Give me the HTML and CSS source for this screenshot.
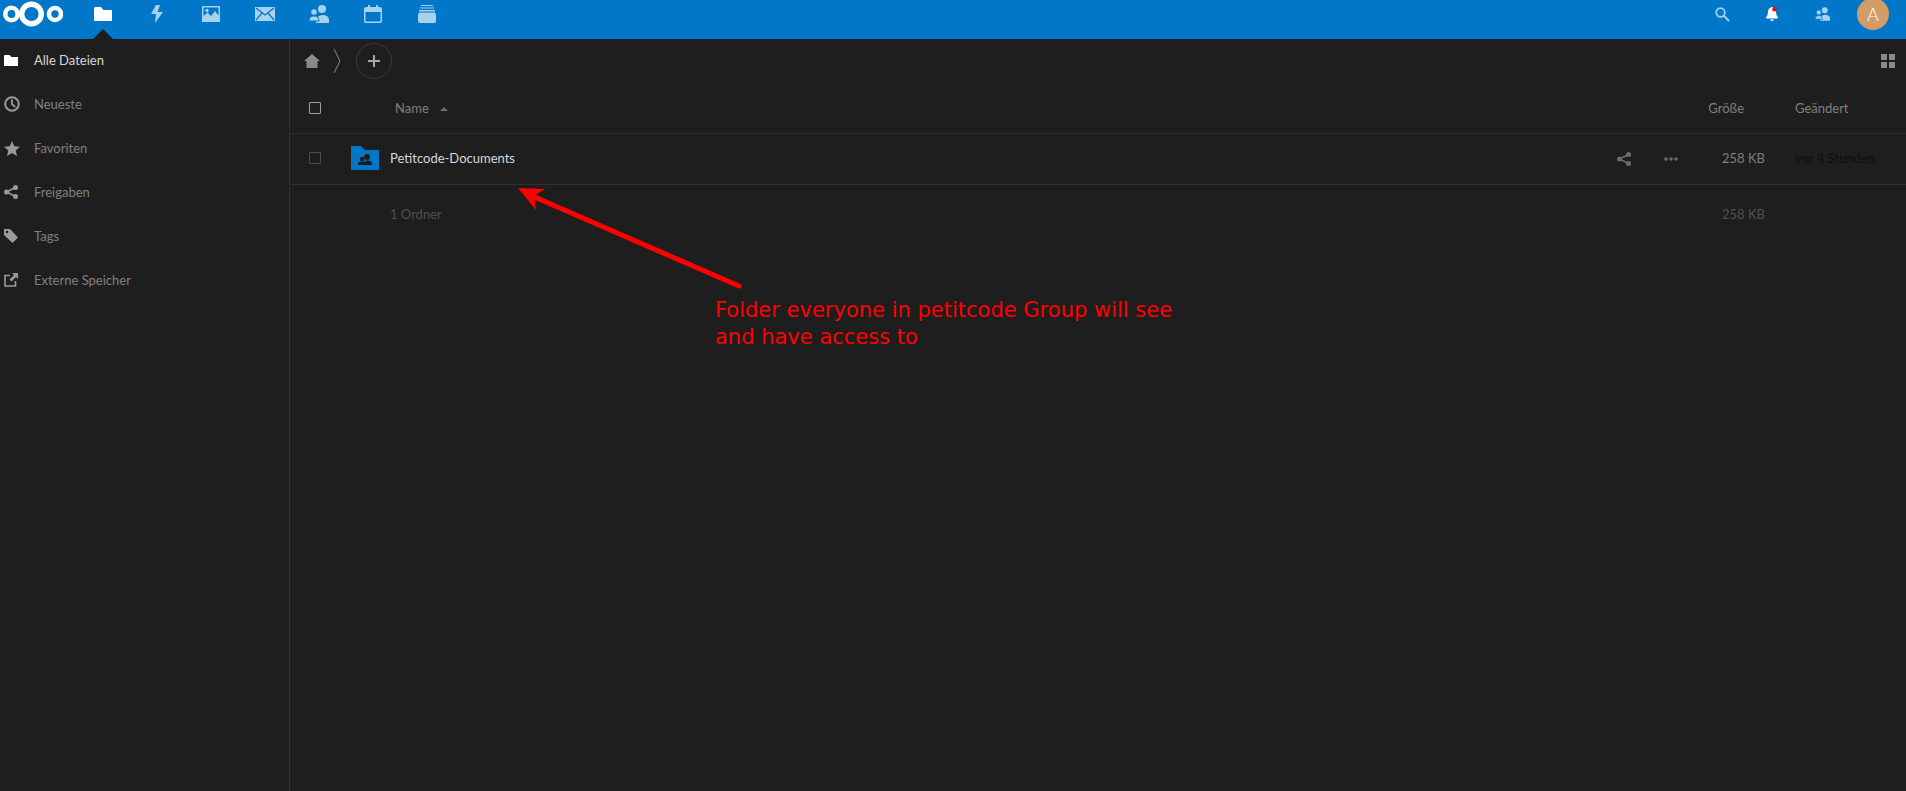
FILE: index.html
```html
<!DOCTYPE html>
<html lang="de">

<head>
    <meta charset="UTF-8">
    <title>Dateien</title>
    <link rel="stylesheet" href="styles.css">
</head>

<body>
    <header class="topbar">
        <svg class="logo" width="60" height="28" viewBox="0 0 60 28">
            <circle cx="8.500" cy="14" r="6.200" fill="none" stroke="#fff" stroke-width="4.600" />
            <circle cx="28.500" cy="14" r="9.800" fill="none" stroke="#fff" stroke-width="5.400" />
            <circle cx="52" cy="14" r="6" fill="none" stroke="#fff" stroke-width="4.600" />
        </svg>
        <nav class="apps">
            <a class="app app-active">
                <svg width="18" height="14" viewBox="0 0 18 14"><path d="M0 1.500Q0 0 1.500 0H7L9.500 3H18V14H0Z" fill="#fff" /></svg>
            </a>
            <a class="app">
                <svg width="12" height="18" viewBox="0 0 12 18"><path d="M5 0 0 9H5L4 18 12 7H6.500L9 0Z" fill="#a6d2ee" /></svg>
            </a>
            <a class="app">
                <svg width="18" height="16" viewBox="0 0 18 16"><path fill-rule="evenodd" d="M0 0H18V16H0ZM1.500 1.500V10L5.500 6.500 9 10 13 5 16.500 9.500V1.500Z" fill="#a6d2ee" /><circle cx="5" cy="4.500" r="1.700" fill="#a6d2ee" /></svg>
            </a>
            <a class="app">
                <svg width="20" height="14" viewBox="0 0 20 14"><path d="M0 0H20V14H0Z" fill="#a6d2ee" /><path d="M1 1 10 8 19 1M1 13 7 6M19 13 13 6" fill="none" stroke="#0077c8" stroke-width="1.200" /></svg>
            </a>
            <a class="app">
                <svg width="20" height="18" viewBox="0 0 20 18"><circle cx="13" cy="4" r="4" fill="#a6d2ee" /><path d="M7 18Q6 11 13 10 20 10 20 15V18Z" fill="#a6d2ee" /><circle cx="5" cy="7" r="3.300" stroke="#0077c8" stroke-width="1" fill="#a6d2ee" /><path d="M0 16Q0 11 5 11 10 11 10 16Z" stroke="#0077c8" stroke-width="1" fill="#a6d2ee" /></svg>
            </a>
            <a class="app">
                <svg width="18" height="18" viewBox="0 0 18 18"><path fill-rule="evenodd" d="M2 2H4V0H6V2H12V0H14V2H16Q18 2 18 4V16Q18 18 16 18H2Q0 18 0 16V4Q0 2 2 2ZM1.500 7V15.500Q1.500 16.500 2.500 16.500H15.500Q16.500 16.500 16.500 15.500V7Z" fill="#a6d2ee" /></svg>
            </a>
            <a class="app">
                <svg width="18" height="18" viewBox="0 0 18 18"><path d="M3 0H15V1H3ZM2 2.500H16V3.500H2ZM1 5H17V6.500H1ZM2 7.500H16Q18 7.500 18 9.500V16Q18 18 16 18H2Q0 18 0 16V9.500Q0 7.500 2 7.500Z" fill="#a6d2ee" /></svg>
            </a>
        </nav>
        <div class="top-right">
            <a class="tool">
                <svg width="15" height="15" viewBox="0 0 15 15"><circle cx="5.500" cy="5.500" r="4.300" fill="none" stroke="#a6d2ee" stroke-width="1.700" /><path d="M8.800 8.800 14 14" stroke="#a6d2ee" stroke-width="2" /></svg>
            </a>
            <a class="tool">
                <svg width="12" height="14" viewBox="0 0 12 14"><path d="M6 0Q10 1 10 5 10 9 12 10.500V11.500H0V10.500Q2 9 2 5 2 1 6 0ZM4 12.500H8Q7.500 14 6 14 4.500 14 4 12.500Z" fill="#fff" /><circle cx="8.500" cy="2.200" r="2.200" fill="#f00" /></svg>
            </a>
            <a class="tool">
                <svg width="15" height="14" viewBox="0 0 20 18"><circle cx="13" cy="4" r="4" fill="#a6d2ee" /><path d="M7 18Q6 11 13 10 20 10 20 15V18Z" fill="#a6d2ee" /><circle cx="5" cy="7" r="3.300" stroke="#0077c8" stroke-width="1" fill="#a6d2ee" /><path d="M0 16Q0 11 5 11 10 11 10 16Z" stroke="#0077c8" stroke-width="1" fill="#a6d2ee" /></svg>
            </a>
            <div class="avatar">A</div>
        </div>
    </header>

    <div class="content">
        <aside class="sidebar">
            <a class="nav-item nav-current">
                <span class="nav-icon"><svg width="14" height="11" viewBox="0 0 14 11"><path d="M0 1Q0 0 1 0H5.500L7.500 2H14V11H0Z" fill="#fff" /></svg></span>
                Alle Dateien
            </a>
            <a class="nav-item">
                <span class="nav-icon"><svg width="16" height="16" viewBox="0 0 16 16"><circle cx="8" cy="8" r="6.800" fill="none" stroke="#9a9a9a" stroke-width="2" /><path d="M7 3.500H8.800V7.500L11.800 10.500 10.500 11.800 7 8.500Z" fill="#9a9a9a" /></svg></span>
                Neueste
            </a>
            <a class="nav-item">
                <span class="nav-icon"><svg width="16" height="15" viewBox="0 0 16 15"><path d="M8 0 10.300 5.200 16 5.700 11.700 9.500 13 15 8 12.100 3 15 4.300 9.500 0 5.700 5.700 5.200Z" fill="#9a9a9a" /></svg></span>
                Favoriten
            </a>
            <a class="nav-item">
                <span class="nav-icon"><svg width="14" height="14" viewBox="0 0 14 14"><circle cx="11.500" cy="2.500" r="2.500" fill="#9a9a9a" /><circle cx="2.500" cy="7" r="2.500" fill="#9a9a9a" /><circle cx="11.500" cy="11.500" r="2.500" fill="#9a9a9a" /><path d="M11.500 2.500 2.500 7 11.500 11.500" fill="none" stroke="#9a9a9a" stroke-width="1.800" /></svg></span>
                Freigaben
            </a>
            <a class="nav-item">
                <span class="nav-icon"><svg width="14" height="14" viewBox="0 0 14 14"><path fill-rule="evenodd" d="M0 0H6L14 8.500 8.500 14 0 6ZM3 1.800A1.200 1.200 0 1 0 3 4.200 1.200 1.200 0 1 0 3 1.800Z" fill="#9a9a9a" /></svg></span>
                Tags
            </a>
            <a class="nav-item">
                <span class="nav-icon"><svg width="14" height="14" viewBox="0 0 14 14"><path d="M6 2.500H1V13H11.500V8" fill="none" stroke="#9a9a9a" stroke-width="1.600" /><path d="M8 0H14V6L12 4 7.500 8.500 5.500 6.500 10 2Z" fill="#9a9a9a" /></svg></span>
                Externe Speicher
            </a>
        </aside>

        <main class="main">
            <div class="controls">
                <svg class="home" width="16" height="14" viewBox="0 0 16 14"><path d="M8 0 16 7H13.500V14H2.500V7H0Z" fill="#8a8a8a" /></svg>
                <svg class="crumb" width="8" height="24" viewBox="0 0 8 24"><path d="M1 0 7 12 1 24" fill="none" stroke="#8a8a8a" /></svg>
                <button class="add-btn">
                    <svg width="12" height="12" viewBox="0 0 12 12"><path d="M5 0H7V5H12V7H7V12H5V7H0V5H5Z" fill="#a8a8a8" /></svg>
                </button>
                <svg class="grid-icon" width="14" height="14" viewBox="0 0 14 14"><path d="M0 0H6V6H0ZM8 0H14V6H8ZM0 8H6V14H0ZM8 8H14V14H8Z" fill="#8a8a8a" /></svg>
            </div>

            <div class="file-row head-row">
                <div class="check-cell"><span class="check"></span></div>
                <div class="name-cell head-name">Name <span class="sort-arrow"></span></div>
                <div class="size-cell head-size">Größe</div>
                <div class="date-cell">Geändert</div>
            </div>

            <div class="file-row folder-row">
                <div class="check-cell"><span class="check check-dim"></span></div>
                <svg class="folder" width="28" height="24" viewBox="0 0 28 24">
                    <path d="M0 0H10L14 4H28V24H0Z" fill="#0077c8" />
                    <circle cx="16" cy="11" r="3" fill="#1b1b1b" />
                    <circle cx="11" cy="13" r="2.300" fill="#1b1b1b" />
                    <path d="M7 18Q7 15.500 10.500 15.500 14 16 16 14.500 21 14.500 21 18V19H7Z" fill="#1b1b1b" />
                </svg>
                <div class="name-cell folder-name">Petitcode-Documents</div>
                <div class="row-actions">
                    <a class="action"><svg width="14" height="14" viewBox="0 0 14 14"><circle cx="11.500" cy="2.500" r="2.500" fill="#6b6b6b" /><circle cx="2.500" cy="7" r="2.500" fill="#6b6b6b" /><circle cx="11.500" cy="11.500" r="2.500" fill="#6b6b6b" /><path d="M11.500 2.500 2.500 7 11.500 11.500" fill="none" stroke="#6b6b6b" stroke-width="1.800" /></svg></a>
                    <a class="action"><svg width="14" height="4" viewBox="0 0 14 4"><circle cx="2" cy="2" r="1.800" fill="#6b6b6b" /><circle cx="7" cy="2" r="1.800" fill="#6b6b6b" /><circle cx="12" cy="2" r="1.800" fill="#6b6b6b" /></svg></a>
                </div>
                <div class="size-cell">258 KB</div>
                <div class="date-cell date-dark">vor 4 Stunden</div>
            </div>

            <div class="file-row summary-row">
                <div class="check-cell"></div>
                <div class="name-cell">1 Ordner</div>
                <div class="size-cell">258 KB</div>
                <div class="date-cell"></div>
            </div>
        </main>
    </div>

    <svg class="arrow" width="240" height="110" viewBox="0 0 240 110">
        <path d="M221 99 12 8" fill="none" stroke="#f00" stroke-width="5" stroke-linecap="round" />
        <path d="M0 1 27 2 16 9 18 23Z" fill="#f00" />
    </svg>
    <div class="note">Folder everyone in petitcode Group will see<br>and have access to</div>
</body>

</html>
```
FILE: styles.css
```css
* {
    box-sizing: border-box;
}

body {
    font-family: Lato, sans-serif;
    font-size: 13px;
    margin: 0;
    padding: 0;
    background-color: #1e1e1e;
    color: #808080;
    display: flex;
    flex-direction: column;
    height: 100vh;
    overflow: hidden;
}

.topbar {
    background-color: #0077c8;
    height: 39px;
    flex-shrink: 0;
    display: flex;
    align-items: flex-start;
}

.logo {
    margin-left: 3px;
    flex-shrink: 0;
}

.apps {
    display: flex;
    margin-left: 13px;
}

.app {
    width: 54px;
    height: 28px;
    display: flex;
    justify-content: center;
    align-items: center;
    position: relative;
}

.app-active::after {
    content: "";
    position: absolute;
    left: 17px;
    top: 29px;
    border-left: 10px solid transparent;
    border-right: 10px solid transparent;
    border-bottom: 10px solid #1e1e1e;
}

.top-right {
    margin-left: auto;
    display: flex;
    align-items: flex-start;
}

.tool {
    width: 50px;
    height: 28px;
    display: flex;
    justify-content: center;
    align-items: center;
}

.avatar {
    width: 32px;
    height: 32px;
    margin: -2px 17px 0 10px;
    border-radius: 50%;
    background-color: #d39c66;
    color: #fff;
    font-size: 18px;
    font-weight: 300;
    display: flex;
    justify-content: center;
    align-items: center;
}

.content {
    flex-grow: 1;
    display: flex;
    min-height: 0;
}

.sidebar {
    width: 290px;
    flex-shrink: 0;
    border-right: 1px solid #303030;
}

.nav-item {
    height: 44px;
    display: flex;
    align-items: center;
    padding-bottom: 2px;
    color: #808080;
}

.nav-current {
    color: #d8d8d8;
}

.nav-icon {
    width: 34px;
    padding-left: 4px;
    display: flex;
    align-items: center;
}

.main {
    flex-grow: 1;
    min-width: 0;
}

.controls {
    height: 46px;
    display: flex;
    align-items: center;
    padding: 0 11px 2px 14px;
}

.crumb {
    margin-left: 13px;
}

.add-btn {
    width: 36px;
    height: 36px;
    margin-left: 15px;
    padding: 0;
    border: 1px solid #3a3a3a;
    border-radius: 50%;
    background-color: transparent;
    display: flex;
    justify-content: center;
    align-items: center;
}

.grid-icon {
    margin-left: auto;
}

.file-row {
    display: flex;
    align-items: center;
}

.check-cell {
    width: 100px;
    flex-shrink: 0;
    padding-left: 19px;
    display: flex;
    align-items: center;
}

.check {
    width: 12px;
    height: 12px;
    border: 1px solid #a0a0a0;
    border-radius: 1px;
}

.check-dim {
    border-color: #4c4c4c;
}

.name-cell {
    flex-grow: 1;
}

.size-cell {
    width: 60px;
    flex-shrink: 0;
    text-align: right;
}

.date-cell {
    width: 141px;
    flex-shrink: 0;
    padding-left: 30px;
}

.head-row {
    height: 49px;
    padding-bottom: 3px;
    border-bottom: 1px solid #303030;
}

.head-name {
    padding-left: 5px;
}

.head-size {
    padding-right: 21px;
}

.sort-arrow {
    display: inline-block;
    margin: 0 0 2px 8px;
    border-left: 4px solid transparent;
    border-right: 4px solid transparent;
    border-bottom: 4px solid #6a6a6a;
}

.folder-row {
    height: 51px;
    padding-bottom: 2px;
    border-bottom: 1px solid #303030;
}

.folder {
    margin-left: -39px;
    margin-right: 11px;
    flex-shrink: 0;
}

.folder-name {
    color: #d8d8d8;
}

.row-actions {
    display: flex;
    margin-right: 11px;
    padding-top: 2px;
}

.action {
    width: 47px;
    display: flex;
    justify-content: center;
    align-items: center;
}

.date-dark {
    color: #0e0e0e;
}

.summary-row {
    height: 58px;
    color: #505050;
}

/* annotation drawn on top of the screenshot */
.arrow {
    position: absolute;
    left: 518px;
    top: 187px;
}

.note {
    position: absolute;
    left: 715px;
    top: 297px;
    color: #f00;
    font-family: "DejaVu Sans", sans-serif;
    font-size: 21px;
    line-height: 27px;
}
```
